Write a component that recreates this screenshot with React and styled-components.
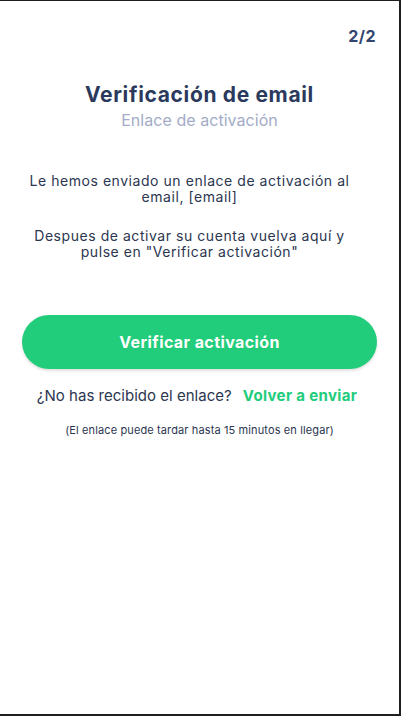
import React from 'react'
import styled, { createGlobalStyle } from 'styled-components'

const GlobalStyle = createGlobalStyle`
  html, body {
    margin: 0;
    padding: 0;
    background: #1f1f1f;
  }
  body {
    font-family: Inter, "Noto Sans", sans-serif;
    -webkit-font-smoothing: antialiased;
  }
`

const Screen = styled.div`
  box-sizing: border-box;
  width: 399px;
  height: 713px;
  margin-top: 1px;
  background: #ffffff;
  display: flex;
  flex-direction: column;
  align-items: center;
  padding: 25px 0 0;
`

const StepRow = styled.div`
  align-self: stretch;
  display: flex;
  justify-content: flex-end;
  padding-right: 23px;
`

const Step = styled.span`
  font-size: 16px;
  font-weight: 700;
  color: #33456e;
  letter-spacing: 0.5px;
`

const Title = styled.h1`
  margin: 36px 0 0;
  font-size: 21px;
  font-weight: 700;
  color: #2b3a5c;
  letter-spacing: 0.65px;
`

const Subtitle = styled.h2`
  margin: 3px 0 0;
  font-size: 16px;
  font-weight: 400;
  color: #a3abc8;
  letter-spacing: 0.05px;
`

const Message = styled.p`
  align-self: stretch;
  margin: ${p => p.$top}px 0 0;
  padding: 0 40px 0 20px;
  text-align: center;
  font-size: 14px;
  line-height: 16px;
  color: #2c3650;
  letter-spacing: 0.55px;
`

const Button = styled.button`
  margin-top: 55px;
  width: 355px;
  height: 54px;
  border: none;
  border-radius: 27px;
  background: #21cc7a;
  color: #ffffff;
  font-family: inherit;
  font-size: 16px;
  font-weight: 700;
  letter-spacing: 0.4px;
  box-shadow: 0 2px 3px rgba(0, 0, 0, 0.12);
  cursor: pointer;
`

const ResendRow = styled.div`
  margin-top: 17px;
  padding-right: 5px;
  display: flex;
  align-items: baseline;
  gap: 11px;
`

const Question = styled.span`
  font-size: 15px;
  color: #2c3650;
  letter-spacing: 0.02px;
`

const Resend = styled.a`
  font-size: 15px;
  font-weight: 700;
  color: #21cc7a;
  letter-spacing: 0.35px;
  cursor: pointer;
`

const Note = styled.p`
  margin: 18px 0 0;
  font-size: 11px;
  color: #2c3650;
  letter-spacing: 0.12px;
`

const App = () => {
  return (
    <>
      <GlobalStyle />
      <Screen>
        <StepRow>
          <Step>2/2</Step>
        </StepRow>
        <Title>Verificación de email</Title>
        <Subtitle>Enlace de activación</Subtitle>
        <Message $top={43}>
          Le hemos enviado un enlace de activación al email, [email]
        </Message>
        <Message $top={23}>
          Despues de activar su cuenta vuelva aquí y pulse en "Verificar activación"
        </Message>
        <Button>Verificar activación</Button>
        <ResendRow>
          <Question>¿No has recibido el enlace?</Question>
          <Resend>Volver a enviar</Resend>
        </ResendRow>
        <Note>(El enlace puede tardar hasta 15 minutos en llegar)</Note>
      </Screen>
    </>
  )
}

export default App
